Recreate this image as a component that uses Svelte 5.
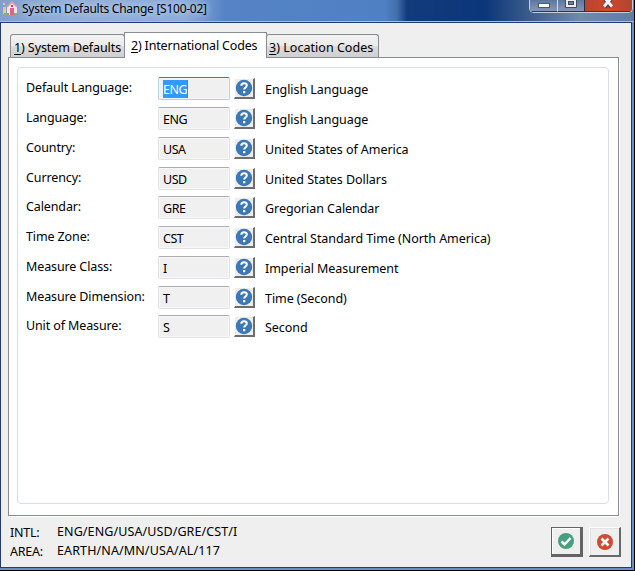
<script>
  const rows = [
    { label: 'Default Language:', code: 'ENG', text: 'English Language', h: 30, focus: true },
    { label: 'Language:', code: 'ENG', text: 'English Language', h: 30 },
    { label: 'Country:', code: 'USA', text: 'United States of America', h: 30 },
    { label: 'Currency:', code: 'USD', text: 'United States Dollars', h: 29 },
    { label: 'Calendar:', code: 'GRE', text: 'Gregorian Calendar', h: 30 },
    { label: 'Time Zone:', code: 'CST', text: 'Central Standard Time (North America)', h: 30 },
    { label: 'Measure Class:', code: 'I', text: 'Imperial Measurement', h: 30 },
    { label: 'Measure Dimension:', code: 'T', text: 'Time (Second)', h: 29 },
    { label: 'Unit of Measure:', code: 'S', text: 'Second', h: 29 }
  ];
</script>

<div class="window">
  <header>
    <svg class="app" width="16" height="16" viewBox="0 0 16 16">
      <path d="M5 7l5-5 5 5v8H5z" fill="#f1e4e6" />
      <path d="M5 7l5-5 5 5" fill="none" stroke="#e599a4" stroke-width="1.500" />
      <path d="M8 8h4v7H8z" fill="#e06488" />
      <path d="M9 5h2v2H9z" fill="#ce3d63" />
      <path d="M1 3h2v2H1zM1 7h3v7H1z" fill="#e6c987" />
      <path d="M2 13h5v2H2zM12 13h4v2h-4z" fill="#8bad6d" />
    </svg>
    <span class="title">System Defaults Change [S100-02]</span>
    <div class="controls">
      <span class="ctl min"><svg width="28" height="12"><rect x="8.500" y="3.500" width="11" height="4" fill="#fff" stroke="#4c586e" /></svg></span>
      <span class="ctl max"><svg width="26" height="12"><path d="M7.500-2h11v9.500h-11z" fill="#eee" stroke="#414b60" /><rect x="10.500" y="1.500" width="5" height="3" fill="#6680a6" stroke="#414b60" /></svg></span>
      <span class="ctl close"><svg width="47" height="12"><path d="M18.500-4l8 11M27.500-4l-8 11" stroke="#573c48" stroke-width="5" /><path d="M19-3l8 9.500M27-3l-8 9.500" stroke="#f4f4f4" stroke-width="3" /></svg></span>
    </div>
  </header>

  <main>
    <nav>
      <span class="tab first"><u>1</u>) System Defaults</span>
      <span class="tab active"><u>2</u>) International Codes</span>
      <span class="tab last"><u>3</u>) Location Codes</span>
    </nav>
    <section class="panel">
      <div class="group">
        {#each rows as row}
          <div class="row" style:height="{row.h}px">
            <span class="label">{row.label}</span>
            <span class="field" class:focus={row.focus}><span class="code">{row.code}</span></span>
            <span class="help">
              <svg width="18" height="18" viewBox="0 0 18 18">
                <circle cx="9" cy="9" r="8.200" fill="#3c78b5" />
                <path d="M6.300 6.800C6.300 4.900 7.500 4.200 9 4.200s2.800.8 2.800 2.300c0 2.100-2.600 1.900-2.600 4" fill="none" stroke="#fff" stroke-width="2" />
                <rect x="8" y="12" width="2.300" height="2.200" fill="#fff" />
              </svg>
            </span>
            <span class="desc">{row.text}</span>
          </div>
        {/each}
      </div>
    </section>
    <footer>
      <div class="status">
        <div><span>INTL:</span><b>ENG/ENG/USA/USD/GRE/CST/I</b></div>
        <div><span>AREA:</span><b class="area">EARTH/NA/MN/USA/AL/117</b></div>
      </div>
      <span class="action ok"><svg width="16" height="16" viewBox="0 0 16 16"><circle cx="8" cy="8" r="8" fill="#46a080" /><path d="M3.500 8.500l3 3 6-6.500" fill="none" stroke="#fff" stroke-width="2.500" /></svg></span>
      <span class="action"><svg width="16" height="16" viewBox="0 0 16 16"><circle cx="8" cy="8" r="8" fill="#d04a32" /><path d="M4.500 4.500l7 7M11.500 4.500l-7 7" fill="none" stroke="#fff" stroke-width="2.600" /></svg></span>
    </footer>
  </main>
</div>

<style>
  .window {
    width: 635px;
    height: 571px;
    box-sizing: border-box;
    border-right: 1px solid #000;
    border-bottom: 1px solid #000;
    background: #6890c8;
    font: 12.5px/18px "Noto Sans", sans-serif;
    color: #000;
    overflow: hidden;
    white-space: nowrap;
  }
  header {
    height: 22px;
    display: flex;
    box-sizing: border-box;
    border-bottom: 1px solid #a5bfe3;
    background: linear-gradient(90deg, #7f9fce 0, #94afd8 70px, #8cacd9 185px, #5583c5 225px, #5080c4 385px, #426fac 397px, #123b7c 407px, #0b3679 485px, #355989 525px, #7189ad 580px, #5f7ba8 634px);
  }
  .app { margin: 0 4px 0 2px; flex: none; }
  .title {
    width: 187px;
    line-height: 17px;
    text-shadow: 0 0 6px #c4d7f2, 0 0 6px #b7ceed;
    font-size: 12px;
    letter-spacing: -0.26px;
  }
  .controls {
    display: flex;
    height: 13px;
    box-sizing: border-box;
    margin-left: 320px;
    border: 1px solid #c3cddd;
    border-top: 0;
    border-radius: 0 0 5px 5px;
    width: 104px;
    overflow: hidden;
  }
  .ctl { height: 12px; box-sizing: border-box; border-bottom: 1px solid #273852; background: linear-gradient(#5c779f, #8398b8); }
  .min { width: 27px; }
  .max { width: 27px; border-left: 1px solid #d5dce8; }
  .close { flex: 1; border-left: 1px solid #2c2c3c; background: linear-gradient(90deg, #b54532, #d54728 50%, #ad4534); }
  .ctl svg { display: block; }
  main {
    width: 632px;
    height: 546px;
    box-sizing: border-box;
    border: 1px solid #263d68;
    background: #efefef;
    padding: 9px 0 0 7px;
  }
  nav { display: flex; height: 25px; align-items: flex-end; padding-left: 2px; position: relative; z-index: 1; }
  .tab {
    box-sizing: border-box;
    height: 23px;
    border: 1px solid #898c95;
    border-bottom: 0;
    border-radius: 3px 3px 0 0;
    background: linear-gradient(#f2f2f2 0, #ebebeb 48%, #dddddd 50%, #cfcfcf 100%);
    padding: 4px 0 0 3px;
    letter-spacing: 0.03px;
  }
  .first { width: 115px; letter-spacing: -0.1px; }
  .last { width: 113px; margin-left: -1px; padding-left: 2px; }
  .active { width: 143px; height: 26px; margin: 0 0 -1px -1px; background: #fff; padding: 4px 0 0 6px; border-radius: 0; letter-spacing: -0.18px; }
  u { text-decoration-thickness: 1px; text-underline-offset: 2px; }
  .panel {
    width: 611px;
    height: 459px;
    box-sizing: border-box;
    border: 1px solid #898c95;
    background: #fff;
    box-shadow: 1px 1px #fff;
    padding: 9px 0 0 8px;
  }
  .group {
    width: 592px;
    height: 437px;
    box-sizing: border-box;
    border: 1px solid #d5dfe5;
    border-radius: 4px;
    padding: 9px 0 0 8px;
  }
  .row { display: flex; align-items: flex-start; }
  .label { width: 132px; padding-top: 2px; letter-spacing: -0.12px; }
  .field {
    width: 72px;
    height: 23px;
    box-sizing: border-box;
    border: 1px solid #e2e3ea;
    border-top-color: #abadb3;
    border-radius: 2px;
    background: #f0f0f0;
    box-shadow: inset 0 0 0 1px #f7f7f8;
    padding: 2px 0 0 4px;
    letter-spacing: -0.45px;
  }
  .focus { border-color: #b5cfe7; border-top-color: #3d7bad; }
  .code { display: inline-block; line-height: 19px; }
  .focus .code { background: #3399ff; color: #fff; border-right: 1px solid #cc6600; height: 18px; line-height: 20px; }
  .help {
    width: 21px;
    height: 21px;
    box-sizing: border-box;
    margin: 1px 0 0 4px;
    border: 1px solid #fff;
    border-right: 2px solid #6d6d6d;
    border-bottom: 2px solid #6d6d6d;
    background: #ededed;
  }
  .help svg { display: block; }
  .desc { margin-left: 10px; padding-top: 4px; letter-spacing: -0.06px; }
  footer { display: flex; width: 620px; }
  .status { width: 543px; box-sizing: border-box; flex: none; padding: 7px 0 0 2px; }
  .status div { display: flex; height: 19px; }
  .status span { width: 47px; padding-top: 1px; letter-spacing: -0.25px; }
  .status b { font-weight: 400; letter-spacing: 0.1px; }
  .status .area { letter-spacing: 0.12px; }
  .action {
    display: flex;
    flex: none;
    align-items: center;
    justify-content: center;
    width: 32px;
    height: 30px;
    box-sizing: border-box;
    margin: 11px 6px 0 0;
    border: 1px solid #fff;
    border-right: 2px solid #696969;
    border-bottom: 2px solid #696969;
    box-shadow: inset 1px 1px #e3e3e3;
  }
  .ok { border: 1px solid #646464; border-right-width: 3px; border-bottom-width: 3px; box-shadow: inset 1px 1px #fff; }
</style>
